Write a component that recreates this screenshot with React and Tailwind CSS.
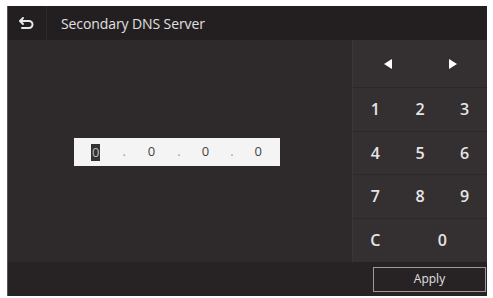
import React from 'react'

function BackIcon() {
    return (
        <svg width="18" height="14" viewBox="0 0 18 14" fill="none">
            <path d="M5 2 L2 5 L5 8" stroke="#e8e8e8" strokeWidth="2" strokeLinecap="round" strokeLinejoin="round" />
            <path d="M2.5 5 H11 a3.5 3.5 0 0 1 0 7 H4" stroke="#e8e8e8" strokeWidth="2" strokeLinecap="round" />
        </svg>
    )
}

function Key({ children, className = '' }) {
    return (
        <div className={`flex items-center justify-center text-[#e6e6e6] text-[16px] font-semibold ${className}`}>{children}</div>
    )
}

export default function App() {
    return (
        <div className="w-[493px] h-[298px] bg-white pl-[7px] pt-[6px] pr-[6px] pb-[2px] font-['Open_Sans',sans-serif]">
            <div className="w-full h-full flex flex-col bg-[#2e2a2b] border-l border-[#555]">
                <header className="h-[34px] flex items-center bg-[#231f20]">
                    <div className="w-[39px] h-full flex items-center justify-center border-r border-[#2d292a]">
                        <BackIcon />
                    </div>
                    <span className="ml-[14px] text-[14px] font-medium text-[#e0e0e0] tracking-[-0.1px]">Secondary DNS Server</span>
                </header>
                <div className="flex-1 flex">
                    <div className="flex-1 flex items-center pl-[66px]">
                        <div className="w-[206px] h-[28px] mt-[2px] bg-[#f4f4f4] flex items-center pl-[17px] text-[13px] text-[#444]">
                            <span className="bg-[#333] text-[#bbb] px-[1px] leading-[17px]">0</span>
                            <span className="ml-[22px] text-[#999]">.</span>
                            <span className="ml-[22px]">0</span>
                            <span className="ml-[22px] text-[#999]">.</span>
                            <span className="ml-[21px]">0</span>
                            <span className="ml-[21px] text-[#999]">.</span>
                            <span className="ml-[21px]">0</span>
                        </div>
                    </div>
                    <div className="w-[135px] bg-[#343031] border-l border-[#3a3637] grid grid-rows-[48px_1fr_1fr_1fr_1fr]">
                        <div className="grid grid-cols-2 border-b border-[#2c2829]">
                            <Key>
                                <span className="w-0 h-0 border-y-[5px] border-y-transparent border-r-[8px] border-r-white ml-[2px]" />
                            </Key>
                            <Key>
                                <span className="w-0 h-0 border-y-[5px] border-y-transparent border-l-[8px] border-l-white mr-[2px]" />
                            </Key>
                        </div>
                        <div className="grid grid-cols-3 border-b border-[#2c2829]">
                            <Key>1</Key>
                            <Key>2</Key>
                            <Key>3</Key>
                        </div>
                        <div className="grid grid-cols-3 border-b border-[#2c2829]">
                            <Key>4</Key>
                            <Key>5</Key>
                            <Key>6</Key>
                        </div>
                        <div className="grid grid-cols-3 border-b border-[#2c2829]">
                            <Key>7</Key>
                            <Key>8</Key>
                            <Key>9</Key>
                        </div>
                        <div className="grid grid-cols-3">
                            <Key>C</Key>
                            <Key className="col-span-2">0</Key>
                        </div>
                    </div>
                </div>
                <footer className="h-[34px] flex items-center justify-end bg-[#272324] pr-[1px]">
                    <div className="w-[113px] h-[25px] border border-[#9a9a9a] flex items-center justify-center text-[12px] text-[#e0e0e0]">
                        Apply
                    </div>
                </footer>
            </div>
        </div>
    )
}
